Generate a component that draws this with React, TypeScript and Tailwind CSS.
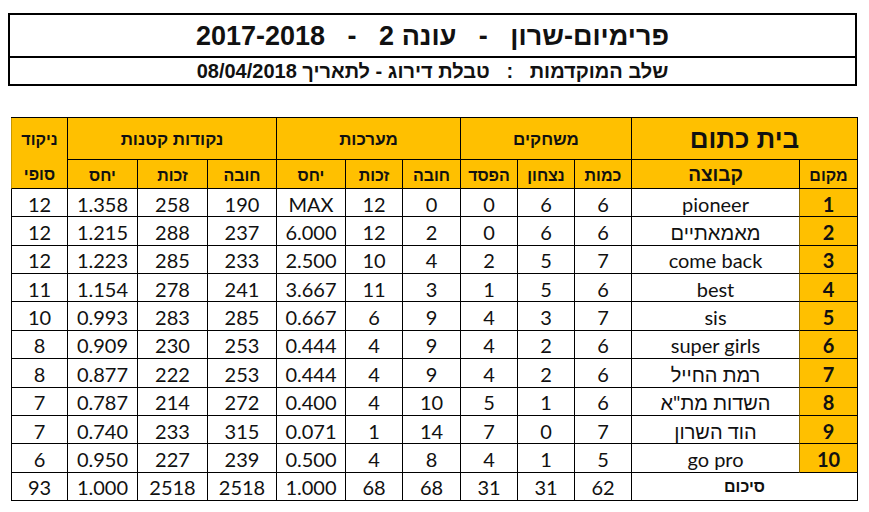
import React from 'react';

const FONT = { fontFamily: 'Lato, "Liberation Sans", sans-serif' };
const HEB = { fontFamily: '"Liberation Sans", Arial, sans-serif' };

// each row left to right: סופי, יחס, זכות, חובה, יחס, זכות, חובה, הפסד, נצחון, כמות, קבוצה, מקום
const rows: (string | number)[][] = [
  [12, '1.358', 258, 190, 'MAX', 12, 0, 0, 6, 6, 'pioneer', 1],
  [12, '1.215', 288, 237, '6.000', 12, 2, 0, 6, 6, 'מאמאתיים', 2],
  [12, '1.223', 285, 233, '2.500', 10, 4, 2, 5, 7, 'come back', 3],
  [11, '1.154', 278, 241, '3.667', 11, 3, 1, 5, 6, 'best', 4],
  [10, '0.993', 283, 285, '0.667', 6, 9, 4, 3, 7, 'sis', 5],
  [8, '0.909', 230, 253, '0.444', 4, 9, 4, 2, 6, 'super girls', 6],
  [8, '0.877', 222, 253, '0.444', 4, 9, 4, 2, 6, 'רמת החייל', 7],
  [7, '0.787', 214, 272, '0.400', 4, 10, 5, 1, 6, 'השדות מת"א', 8],
  [7, '0.740', 233, 315, '0.071', 1, 14, 7, 0, 7, 'הוד השרון', 9],
  [6, '0.950', 227, 239, '0.500', 4, 8, 4, 1, 5, 'go pro', 10],
];

const totals = [93, '1.000', 2518, 2518, '1.000', 68, 68, 31, 31, 62];

const subHeads = ['יחס', 'זכות', 'חובה', 'יחס', 'זכות', 'חובה', 'הפסד', 'נצחון', 'כמות', 'קבוצה', 'מקום'];

const cell = 'flex items-center justify-center border-r border-b border-black';

export default function App() {
  return (
    <div className="w-[869px] h-[512px] bg-white overflow-hidden pt-[13px]" style={FONT}>
      {/* title box */}
      <div className="ml-[8px] w-[849px] border-2 border-black flex flex-col" style={HEB}>
        <div dir="rtl" className="h-[41px] flex items-center justify-center pt-[2px] text-[27px] font-bold whitespace-pre text-[#111]">
          {'פרימיום-שרון   -   עונה 2   -   2017-2018'}
        </div>
        <div dir="rtl" className="h-[28px] border-t-2 border-black flex items-center justify-center text-[20px] font-bold whitespace-pre text-[#111]">
          {'שלב המוקדמות   :   טבלת דירוג - לתאריך 08/04/2018'}
        </div>
      </div>

      {/* standings table */}
      <div className="mt-[31px] ml-[11px] w-[847px] grid grid-cols-[57px_70px_70px_69px_69px_57px_58px_57px_57px_57px_168px_58px] grid-rows-[41px_30px_repeat(11,28.36px)] border-t border-black text-[#111]">
        {/* header row 1 */}
        <div className="row-span-2 bg-[#ffc000] border-l border-l-[#c99700] border-r border-b border-black flex flex-col font-bold text-[16px]" style={HEB}>
          <div className="h-[41px] pt-[3px] flex items-center justify-center">ניקוד</div>
          <div className="flex-1 pt-[3px] flex items-center justify-center">סופי</div>
        </div>
        <div className={`${cell} col-span-3 bg-[#ffc000] border-b-0 pt-[3px] font-bold text-[17px]`} style={HEB}>נקודות קטנות</div>
        <div className={`${cell} col-span-3 bg-[#ffc000] border-b-0 pt-[3px] font-bold text-[17px]`} style={HEB}>מערכות</div>
        <div className={`${cell} col-span-3 bg-[#ffc000] border-b-0 pt-[3px] font-bold text-[17px]`} style={HEB}>משחקים</div>
        <div className={`${cell} col-span-2 bg-[#ffc000] border-b-0 pt-[2px] font-bold text-[26px]`} style={HEB}>בית כתום</div>

        {/* header row 2 */}
        {subHeads.map((h, i) => (
          <div
            key={i}
            className={`${cell} bg-[#ffc000] border-t pt-[3px] font-bold ${i === 9 ? 'text-[19px]' : 'text-[16px]'}`}
            style={HEB}
          >
            {h}
          </div>
        ))}

        {/* data rows */}
        {rows.map((r, ri) =>
          r.map((v, ci) => {
            if (ci === 11) {
              return (
                <div key={`${ri}-${ci}`} className={`${cell} bg-[#ffc000] pt-[2px] font-bold text-[20px]`}>
                  {v}
                </div>
              );
            }
            if (ci === 10) {
              return (
                <div key={`${ri}-${ci}`} className={`${cell} border-r-[#8c6a00] pt-[2px] text-[20px]`}>
                  {v}
                </div>
              );
            }
            return (
              <div key={`${ri}-${ci}`} className={`${cell} ${ci === 0 ? 'border-l' : ''} pt-[2px] text-[20px]`}>
                {v}
              </div>
            );
          })
        )}

        {/* totals */}
        {totals.map((v, i) => (
          <div key={`t-${i}`} className={`${cell} ${i === 0 ? 'border-l' : ''} pt-[2px] text-[20px]`}>
            {v}
          </div>
        ))}
        <div className={`${cell} col-span-2 pt-[2px] font-bold text-[16px]`} style={HEB}>סיכום</div>
      </div>
    </div>
  );
}
